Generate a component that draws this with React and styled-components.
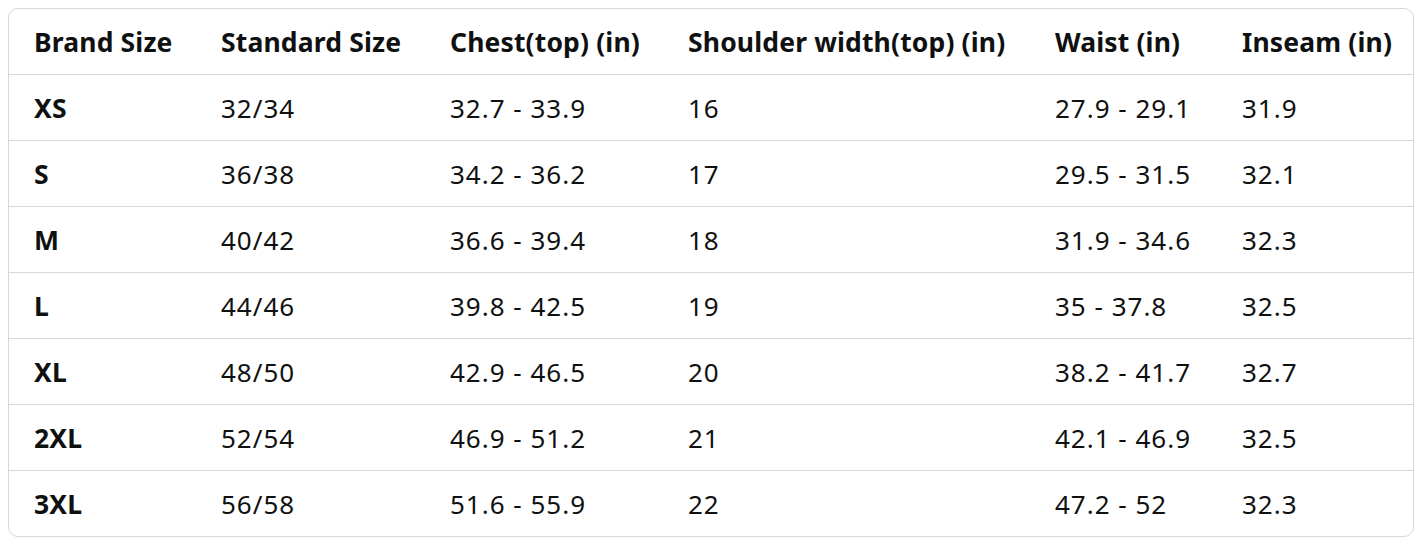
import styled, { createGlobalStyle } from 'styled-components';

const GlobalStyle = createGlobalStyle`
  body {
    margin: 0;
    background: #ffffff;
    font-family: "Noto Sans", "Open Sans", sans-serif;
    color: #0f1111;
  }
`;

const Page = styled.div`
  padding: 8px;
  width: 1406px;
`;

const TableBox = styled.div`
  border: 1px solid #d5d9d9;
  border-radius: 10px;
  overflow: hidden;
`;

const Table = styled.table`
  width: 100%;
  border-collapse: collapse;
  table-layout: fixed;
`;

const Cell = styled.td`
  height: 65px;
  padding: 0 0 0 25px;
  font-size: ${(p) => (p.$bold ? '26.5px' : '26px')};
  letter-spacing: ${(p) => (p.$bold ? '0.15px' : '1px')};
  font-weight: ${(p) => (p.$bold ? 700 : 400)};
  text-align: left;
  vertical-align: middle;
  white-space: nowrap;
  border-top: ${(p) => (p.$first ? 'none' : '1px solid #d5d9d9')};
`;

const widths = [187, 229, 238, 367, 187, 196];

const headers = [
  'Brand Size',
  'Standard Size',
  'Chest(top) (in)',
  'Shoulder width(top) (in)',
  'Waist (in)',
  'Inseam (in)',
];

const rows = [
  ['XS', '32/34', '32.7 - 33.9', '16', '27.9 - 29.1', '31.9'],
  ['S', '36/38', '34.2 - 36.2', '17', '29.5 - 31.5', '32.1'],
  ['M', '40/42', '36.6 - 39.4', '18', '31.9 - 34.6', '32.3'],
  ['L', '44/46', '39.8 - 42.5', '19', '35 - 37.8', '32.5'],
  ['XL', '48/50', '42.9 - 46.5', '20', '38.2 - 41.7', '32.7'],
  ['2XL', '52/54', '46.9 - 51.2', '21', '42.1 - 46.9', '32.5'],
  ['3XL', '56/58', '51.6 - 55.9', '22', '47.2 - 52', '32.3'],
];

function App() {
  return (
    <Page>
      <GlobalStyle />
      <TableBox>
        <Table>
          <colgroup>
            {widths.map((w, i) => (
              <col key={i} style={{ width: w }} />
            ))}
          </colgroup>
          <tbody>
            <tr>
              {headers.map((h) => (
                <Cell key={h} $bold $first>
                  {h}
                </Cell>
              ))}
            </tr>
            {rows.map((r) => (
              <tr key={r[0]}>
                {r.map((v, i) => (
                  <Cell key={i} $bold={i === 0}>
                    {v}
                  </Cell>
                ))}
              </tr>
            ))}
          </tbody>
        </Table>
      </TableBox>
    </Page>
  );
}

export default App;
